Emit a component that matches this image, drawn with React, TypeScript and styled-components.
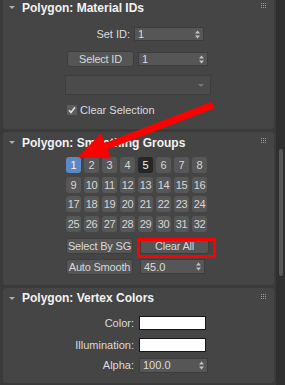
import React from "react";
import styled, { createGlobalStyle } from "styled-components";

const GlobalStyle = createGlobalStyle`
  html, body { margin: 0; padding: 0; background: #3a3a3a; }
  body { font-family: "Liberation Sans", Arial, sans-serif; }
  * { box-sizing: border-box; }
`;

const Page = styled.div`
  position: relative;
  width: 285px;
  height: 385px;
  overflow: hidden;
  background: #3a3a3a;
  display: flex;
  align-items: flex-start;
`;

const Stack = styled.div`
  width: 271px;
  margin-left: 3px;
  margin-top: -3px;
  display: flex;
  flex-direction: column;
  gap: 3px;
`;

const ScrollTrack = styled.div`
  width: 9px;
  height: 385px;
  margin-left: 2px;
  background: #2f2f2f;
  display: flex;
  justify-content: center;
`;

const ScrollThumb = styled.div`
  width: 4px;
  height: 127px;
  margin-top: 149px;
  border-radius: 2px;
  background: #575757;
`;

const Panel = styled.section<{ $pb: number }>`
  background: #454545;
  border-radius: 3px;
  padding-bottom: ${(p) => p.$pb}px;
  display: flex;
  flex-direction: column;
`;

const Header = styled.div`
  height: 21px;
  display: flex;
  align-items: center;
  padding: 0 8px 0 6px;
`;

const Caret = styled.span`
  width: 0;
  height: 0;
  border-left: 3px solid transparent;
  border-right: 3px solid transparent;
  border-top: 3px solid #adadad;
  margin-right: 7px;
`;

const Title = styled.span`
  font-weight: bold;
  font-size: 12px;
  color: #f2f2f2;
  white-space: nowrap;
`;

const Grip = styled.span`
  margin-left: auto;
  display: grid;
  grid-template-columns: repeat(3, 1px);
  grid-auto-rows: 1px;
  gap: 1px;
  align-self: flex-start;
  margin-top: 6px;
`;

const Dot = styled.span`
  background: #9a9a9a;
`;

const Row = styled.div<{ $mt: number; $ml: number; $gap?: number; $h: number }>`
  display: flex;
  align-items: center;
  height: ${(p) => p.$h}px;
  margin-top: ${(p) => p.$mt}px;
  margin-left: ${(p) => p.$ml}px;
  gap: ${(p) => p.$gap ?? 0}px;
`;

const Label = styled.span<{ $w: number; $pr: number }>`
  width: ${(p) => p.$w}px;
  padding-right: ${(p) => p.$pr}px;
  text-align: right;
  font-size: 11px;
  color: #dcdcdc;
  white-space: nowrap;
`;

const SpinBox = styled.div<{ $w: number; $h?: number }>`
  width: ${(p) => p.$w}px;
  height: ${(p) => p.$h ?? 14}px;
  background: #565656;
  border: 1px solid #3c3c3c;
  display: flex;
  align-items: center;
  padding: 0 3px 0 3px;
  font-size: 11px;
  color: #dcdcdc;
`;

const SpinValue = styled.span`
  flex: 1;
`;

const Button = styled.div<{ $w: number; $h?: number }>`
  width: ${(p) => p.$w}px;
  height: ${(p) => p.$h ?? 16}px;
  background: #555555;
  border: 1px solid #3d3d3d;
  border-radius: 3px;
  display: flex;
  align-items: center;
  justify-content: center;
  font-size: 11px;
  letter-spacing: -0.2px;
  color: #d8d8d8;
  white-space: nowrap;
`;

const Dropdown = styled.div`
  width: 146px;
  height: 20px;
  margin-left: 62px;
  margin-top: 8px;
  background: #4b4b4b;
  border: 1px solid #3d3d3d;
  display: flex;
  align-items: center;
  justify-content: flex-end;
  padding-right: 6px;
`;

const DropArrow = styled.span`
  width: 0;
  height: 0;
  border-left: 3px solid transparent;
  border-right: 3px solid transparent;
  border-top: 3px solid #777;
`;

const Check = styled.span`
  width: 10px;
  height: 10px;
  background: #5c5c5c;
  display: flex;
  align-items: center;
  justify-content: center;
`;

const CheckText = styled.span`
  font-size: 11px;
  color: #dcdcdc;
  margin-left: 3px;
`;

const SGGrid = styled.div`
  margin-left: 63px;
  margin-top: 4px;
  display: grid;
  grid-template-columns: repeat(8, 15px);
  grid-auto-rows: 16px;
  column-gap: 3px;
  row-gap: 3.5px;
`;

const SGButton = styled.div<{ $state: "on" | "off" | "dark" }>`
  border-radius: 3px;
  background: ${(p) => (p.$state === "on" ? "#5b89c6" : p.$state === "dark" ? "#262626" : "#575757")};
  color: ${(p) => (p.$state === "off" ? "#d6d6d6" : "#f4f4f4")};
  font-size: 11px;
  display: flex;
  align-items: center;
  justify-content: center;
  letter-spacing: -0.3px;
`;

const HighlightWrap = styled.div`
  position: relative;
`;

const RedBox = styled.div`
  position: absolute;
  left: -3px;
  top: 0;
  right: -7px;
  bottom: -4px;
  border: 3px solid #ff0000;
  pointer-events: none;
`;

const Swatch = styled.div`
  width: 67px;
  height: 14px;
  background: #ffffff;
  border: 1px solid #151515;
`;

const Overlay = styled.svg`
  position: absolute;
  left: 0;
  top: 0;
  pointer-events: none;
`;

const SpinArrows = () => (
  <svg width="5" height="9" viewBox="0 0 5 9">
    <path d="M2.5 0.5 L5 3.5 L0 3.5 Z" fill="#c4c4c4" />
    <path d="M0 5.5 L5 5.5 L2.5 8.5 Z" fill="#c4c4c4" />
  </svg>
);

const Spinner = ({ w, value, h }: { w: number; value: string; h?: number }) => (
  <SpinBox $w={w} $h={h}>
    <SpinValue>{value}</SpinValue>
    <SpinArrows />
  </SpinBox>
);

const PanelHeader = ({ title }: { title: string }) => (
  <Header>
    <Caret />
    <Title>{title}</Title>
    <Grip>
      {Array.from({ length: 9 }).map((_, i) => (
        <Dot key={i} />
      ))}
    </Grip>
  </Header>
);

export default function App() {
  const nums = Array.from({ length: 32 }, (_, i) => i + 1);
  return (
    <>
      <GlobalStyle />
      <Page>
        <Stack>
          <Panel $pb={13}>
            <PanelHeader title="Polygon: Material IDs" />
            <Row $mt={9} $ml={60} $h={14}>
              <Label $w={71} $pr={4}>Set ID:</Label>
              <Spinner w={70} value="1" />
            </Row>
            <Row $mt={10} $ml={64} $gap={4} $h={16}>
              <Button $w={67}>Select ID</Button>
              <Spinner w={70} value="1" />
            </Row>
            <Dropdown>
              <DropArrow />
            </Dropdown>
            <Row $mt={8} $ml={64} $h={13}>
              <Check>
                <svg width="8" height="8" viewBox="0 0 8 8">
                  <path d="M1 4.2 L3 6.4 L7 1.2" stroke="#e0e0e0" strokeWidth="1.6" fill="none" />
                </svg>
              </Check>
              <CheckText>Clear Selection</CheckText>
            </Row>
          </Panel>

          <Panel $pb={10}>
            <PanelHeader title="Polygon: Smoothing Groups" />
            <SGGrid>
              {nums.map((n) => (
                <SGButton key={n} $state={n === 1 ? "on" : n === 5 ? "dark" : "off"}>
                  {n}
                </SGButton>
              ))}
            </SGGrid>
            <Row $mt={6} $ml={63} $gap={7} $h={16}>
              <Button $w={67}>Select By SG</Button>
              <HighlightWrap>
                <Button $w={69}>Clear All</Button>
                <RedBox />
              </HighlightWrap>
            </Row>
            <Row $mt={5} $ml={63} $gap={7} $h={16}>
              <Button $w={67}>Auto Smooth</Button>
              <Spinner w={65} h={15} value="45.0" />
            </Row>
          </Panel>

          <Panel $pb={10}>
            <PanelHeader title="Polygon: Vertex Colors" />
            <Row $mt={7} $ml={60} $h={14}>
              <Label $w={76} $pr={5}>Color:</Label>
              <Swatch />
            </Row>
            <Row $mt={8} $ml={60} $h={14}>
              <Label $w={76} $pr={5}>Illumination:</Label>
              <Swatch />
            </Row>
            <Row $mt={6} $ml={60} $h={15}>
              <Label $w={76} $pr={5}>Alpha:</Label>
              <Spinner w={69} h={15} value="100.0" />
            </Row>
          </Panel>
        </Stack>
        <ScrollTrack>
          <ScrollThumb />
        </ScrollTrack>
        <Overlay width="285" height="385" viewBox="0 0 285 385">
          <polygon points="107.3,149.5 214.3,108.3 211.7,101.7 104.7,142.9" fill="#ff0000" />
          <polygon points="78,157 111,158.5 101,133.5" fill="#ff0000" />
        </Overlay>
      </Page>
    </>
  );
}
